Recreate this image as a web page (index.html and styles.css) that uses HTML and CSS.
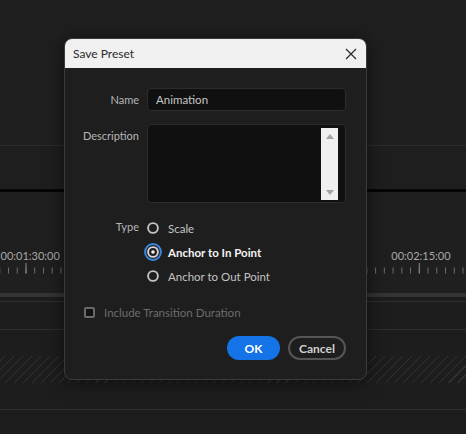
FILE: index.html
```html
<!DOCTYPE html>
<html lang="en">
<head>
  <meta charset="UTF-8">
  <title>Save Preset</title>
  <link rel="stylesheet" href="styles.css">
</head>
<body>
  <div class="app">
    <div class="panel-top"></div>
    <div class="panel-gap"></div>
    <div class="playhead-bar"></div>

    <div class="ruler">
      <svg class="ruler-svg" width="466" height="101" viewBox="0 0 466 101">
        <defs>
          <pattern id="ticks" x="8" y="0" width="8.74" height="101" patternUnits="userSpaceOnUse">
            <rect x="0" y="75.5" width="1" height="6" fill="#6c6c6c"/>
          </pattern>
        </defs>
        <rect x="0" y="0" width="466" height="101" fill="url(#ticks)"/>
        <rect x="25.5" y="71" width="1" height="10.5" fill="#8a8a8a"/>
        <rect x="418.8" y="71" width="1" height="10.5" fill="#8a8a8a"/>
        <text x="0.5" y="68" class="timecode">00:01:30:00</text>
        <text x="421" y="68" class="timecode" text-anchor="middle">00:02:15:00</text>
      </svg>
    </div>

    <div class="scroll-bar"></div>
    <div class="track track-thin"></div>
    <div class="track track-a"></div>
    <div class="track track-b"></div>
    <div class="track track-hatched"></div>
    <div class="track track-c"></div>
    <div class="track track-rest"></div>
  </div>

  <div class="dialog">
    <div class="dialog-header">
      <span class="dialog-title">Save Preset</span>
      <svg class="close-icon" width="12" height="12" viewBox="0 0 12 12">
        <path d="M1 1 L11 11 M11 1 L1 11" stroke="#2a2a2a" stroke-width="1.2" fill="none"/>
      </svg>
    </div>

    <div class="dialog-body">
      <div class="form">
        <label class="form-label label-center">Name</label>
        <div class="text-input">Animation</div>

        <label class="form-label label-top">Description</label>
        <div class="text-area">
          <div class="scrollbar">
            <span class="arrow-up"></span>
            <span class="arrow-down"></span>
          </div>
        </div>

        <label class="form-label label-type">Type</label>
        <div class="radio-group">
          <div class="radio-row">
            <svg class="radio" width="18" height="18" viewBox="0 0 18 18">
              <circle cx="9" cy="9" r="4.9" stroke="#c4c4c4" stroke-width="1.9" fill="none"/>
            </svg>
            <span>Scale</span>
          </div>
          <div class="radio-row selected">
            <svg class="radio" width="18" height="18" viewBox="0 0 18 18">
              <circle cx="9" cy="9" r="7.9" stroke="#3a86e0" stroke-width="2" fill="none"/>
              <circle cx="9" cy="9" r="4.9" stroke="#d6d6d6" stroke-width="1.9" fill="#1e1e1e"/>
              <circle cx="9" cy="9" r="1.8" fill="#f2f2f2"/>
            </svg>
            <span>Anchor to In Point</span>
          </div>
          <div class="radio-row">
            <svg class="radio" width="18" height="18" viewBox="0 0 18 18">
              <circle cx="9" cy="9" r="4.9" stroke="#c4c4c4" stroke-width="1.9" fill="none"/>
            </svg>
            <span>Anchor to Out Point</span>
          </div>
        </div>
      </div>

      <div class="checkbox-row">
        <span class="checkbox"></span>
        <span>Include Transition Duration</span>
      </div>

      <div class="button-row">
        <button class="btn btn-primary">OK</button>
        <button class="btn btn-secondary">Cancel</button>
      </div>
    </div>
  </div>
</body>
</html>
```

FILE: styles.css
```css
body {
  margin: 0;
  background: #1f1f1f;
  font-family: Lato, "Open Sans", sans-serif;
  width: 466px;
  height: 434px;
  overflow: hidden;
  position: relative;
}

/* background editor panels */
.app {
  display: flex;
  flex-direction: column;
}
.panel-top {
  height: 145px;
  border-bottom: 1px solid #2c2c2c;
  background: #1f1f1f;
}
.panel-gap {
  height: 43px;
  background: #1e1e1e;
}
.playhead-bar {
  height: 3px;
  background: #050505;
}
.ruler {
  height: 101px;
  background: #1f1f1f;
}
.ruler-svg {
  display: block;
}
.timecode {
  font-family: Lato, "Open Sans", sans-serif;
  font-size: 11px;
  fill: #a9a9a9;
}
.scroll-bar {
  height: 4px;
  background: #343434;
}
.track {
  background: #1d1d1d;
}
.track-thin {
  height: 4px;
  border-bottom: 1px solid #2e2e2e;
}
.track-a {
  height: 27px;
  border-bottom: 1px solid #2e2e2e;
}
.track-b {
  height: 26px;
}
.track-hatched {
  height: 27px;
  background: repeating-linear-gradient(-45deg, #1d1d1d 0, #1d1d1d 5.6px, #333333 5.6px, #333333 6.4px);
}
.track-c {
  height: 26px;
  border-bottom: 1px solid #2e2e2e;
}
.track-rest {
  height: 24px;
}

/* dialog */
.dialog {
  position: absolute;
  left: 64px;
  top: 38px;
  width: 303px;
  box-sizing: border-box;
  border: 1px solid #3b3b3b;
  border-radius: 8px;
  background: #1e1e1e;
  box-shadow: 0 2px 18px rgba(0, 0, 0, 0.55);
  overflow: hidden;
}
.dialog-header {
  height: 29px;
  background: #f0f0f0;
  display: flex;
  align-items: center;
  justify-content: space-between;
  padding: 0 9px 0 8px;
}
.dialog-title {
  font-size: 12px;
  color: #2a2a2a;
}
.close-icon {
  display: block;
  margin-top: 1px;
}
.dialog-body {
  padding: 20px 20px 19px 0;
}
.form {
  display: grid;
  grid-template-columns: 74px 199px;
  column-gap: 8px;
  row-gap: 13px;
}
.form-label {
  font-size: 11px;
  color: #b6b6b6;
  text-align: right;
}
.label-center {
  align-self: center;
}
.label-top {
  padding-top: 5px;
}
.label-type {
  line-height: 22px;
}
.text-input {
  height: 23px;
  box-sizing: border-box;
  background: #101010;
  border: 1px solid #2c2c2c;
  border-radius: 4px;
  padding-left: 8px;
  font-size: 11.5px;
  line-height: 21px;
  color: #c6c6c6;
}
.text-area {
  height: 79px;
  box-sizing: border-box;
  background: #101010;
  border: 1px solid #2c2c2c;
  border-radius: 4px;
  display: flex;
  justify-content: flex-end;
  padding: 3px 7px 2px 0;
}
.scrollbar {
  width: 17px;
  background: #efefef;
  display: flex;
  flex-direction: column;
  align-items: center;
  justify-content: space-between;
  padding: 6px 0 5px;
  box-sizing: border-box;
}
.arrow-up {
  width: 0;
  height: 0;
  border-left: 4px solid transparent;
  border-right: 4px solid transparent;
  border-bottom: 5px solid #a3a3a3;
}
.arrow-down {
  width: 0;
  height: 0;
  border-left: 4px solid transparent;
  border-right: 4px solid transparent;
  border-top: 5px solid #a3a3a3;
}
.radio-group {
  display: flex;
  flex-direction: column;
}
.radio-row {
  height: 24px;
  display: flex;
  align-items: center;
  gap: 6px;
  font-size: 11.5px;
  color: #c4c4c4;
}
.radio {
  display: block;
  margin-left: -3px;
}
.radio-row.selected {
  color: #f4f4f4;
  font-weight: 700;
}
.checkbox-row {
  margin-top: 12px;
  height: 24px;
  display: flex;
  align-items: center;
  gap: 9px;
  padding-left: 19px;
  font-size: 11.5px;
  color: #6c6c6c;
}
.checkbox {
  width: 11px;
  height: 11px;
  box-sizing: border-box;
  border: 2px solid #6a6a6a;
  border-radius: 2px;
  background: #121212;
}
.button-row {
  margin-top: 12px;
  display: flex;
  justify-content: flex-end;
  gap: 8px;
}
.btn {
  height: 24px;
  border-radius: 12px;
  font-family: Lato, "Open Sans", sans-serif;
  font-size: 12px;
  font-weight: 700;
  padding: 0;
  box-sizing: border-box;
}
.btn-primary {
  width: 53px;
  background: #1473e6;
  border: none;
  color: #ffffff;
}
.btn-secondary {
  width: 58px;
  background: transparent;
  border: 2px solid #555555;
  color: #d0d0d0;
}
```
